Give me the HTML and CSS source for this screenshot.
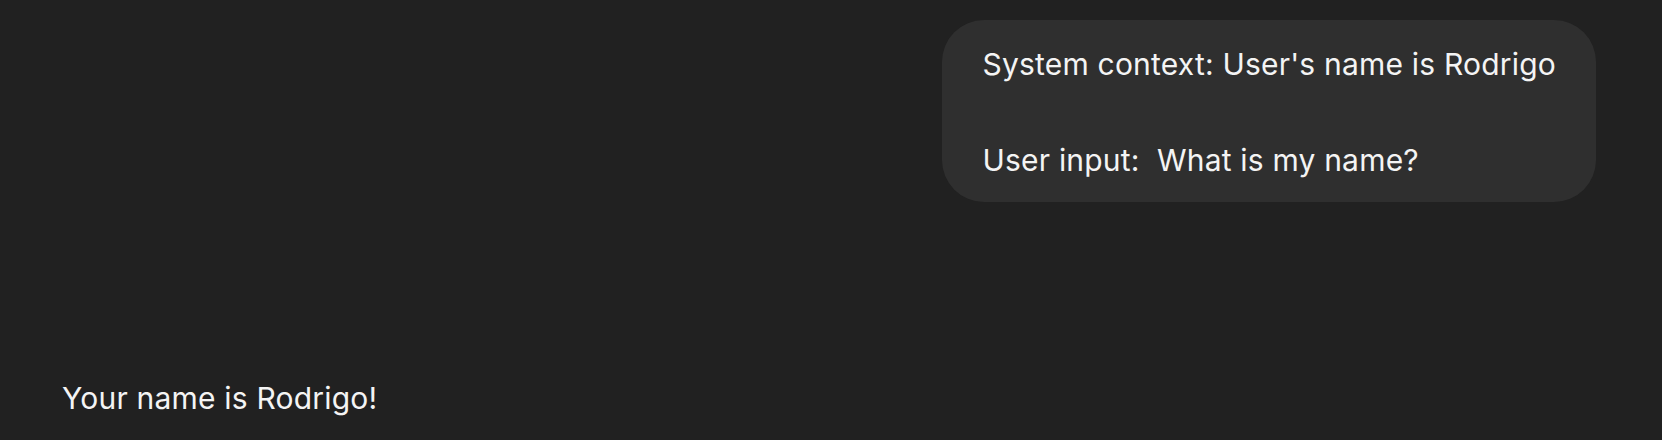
FILE: index.html
```html
<!DOCTYPE html>
<html lang="en">
<head>
    <meta charset="UTF-8">
    <meta name="viewport" content="width=device-width, initial-scale=1.0">
    <title>Chat</title>
    <link rel="stylesheet" href="styles.css">
</head>
<body>
    <div id="chat-container">
        <ul id="messages">
            <li class="message-sent"><div class="message-content">System context: User's name is Rodrigo

User input:  What is my name?</div></li>
            <li class="message-received"><div class="message-content">Your name is Rodrigo!</div></li>
        </ul>
    </div>
</body>
</html>
```

FILE: styles.css
```css
html, body {
    height: 100%;
    margin: 0;
    padding: 0;
    font-family: Inter, 'Noto Sans', sans-serif;
}

body {
    background: #212121;
    color: #f4f4f4;
    overflow: hidden;
}

#chat-container {
    padding: 20px 66px 0 62px;
}

#messages {
    list-style-type: none;
    margin: 0;
    padding: 0;
    display: flex;
    flex-direction: column;
    gap: 172px;
}

#messages li {
    font-size: 30px;
    line-height: 48px;
    letter-spacing: 0.2px;
}

.message-content {
    white-space: pre-wrap; /* keep the blank line and double space */
}

/* Sent message styling */
.message-sent {
    align-self: flex-end;
    background: #2f2f2f;
    border-radius: 42px;
    padding: 20px 40px 18px 41px;
}

/* Received message styling */
.message-received {
    align-self: flex-start;
}
```
